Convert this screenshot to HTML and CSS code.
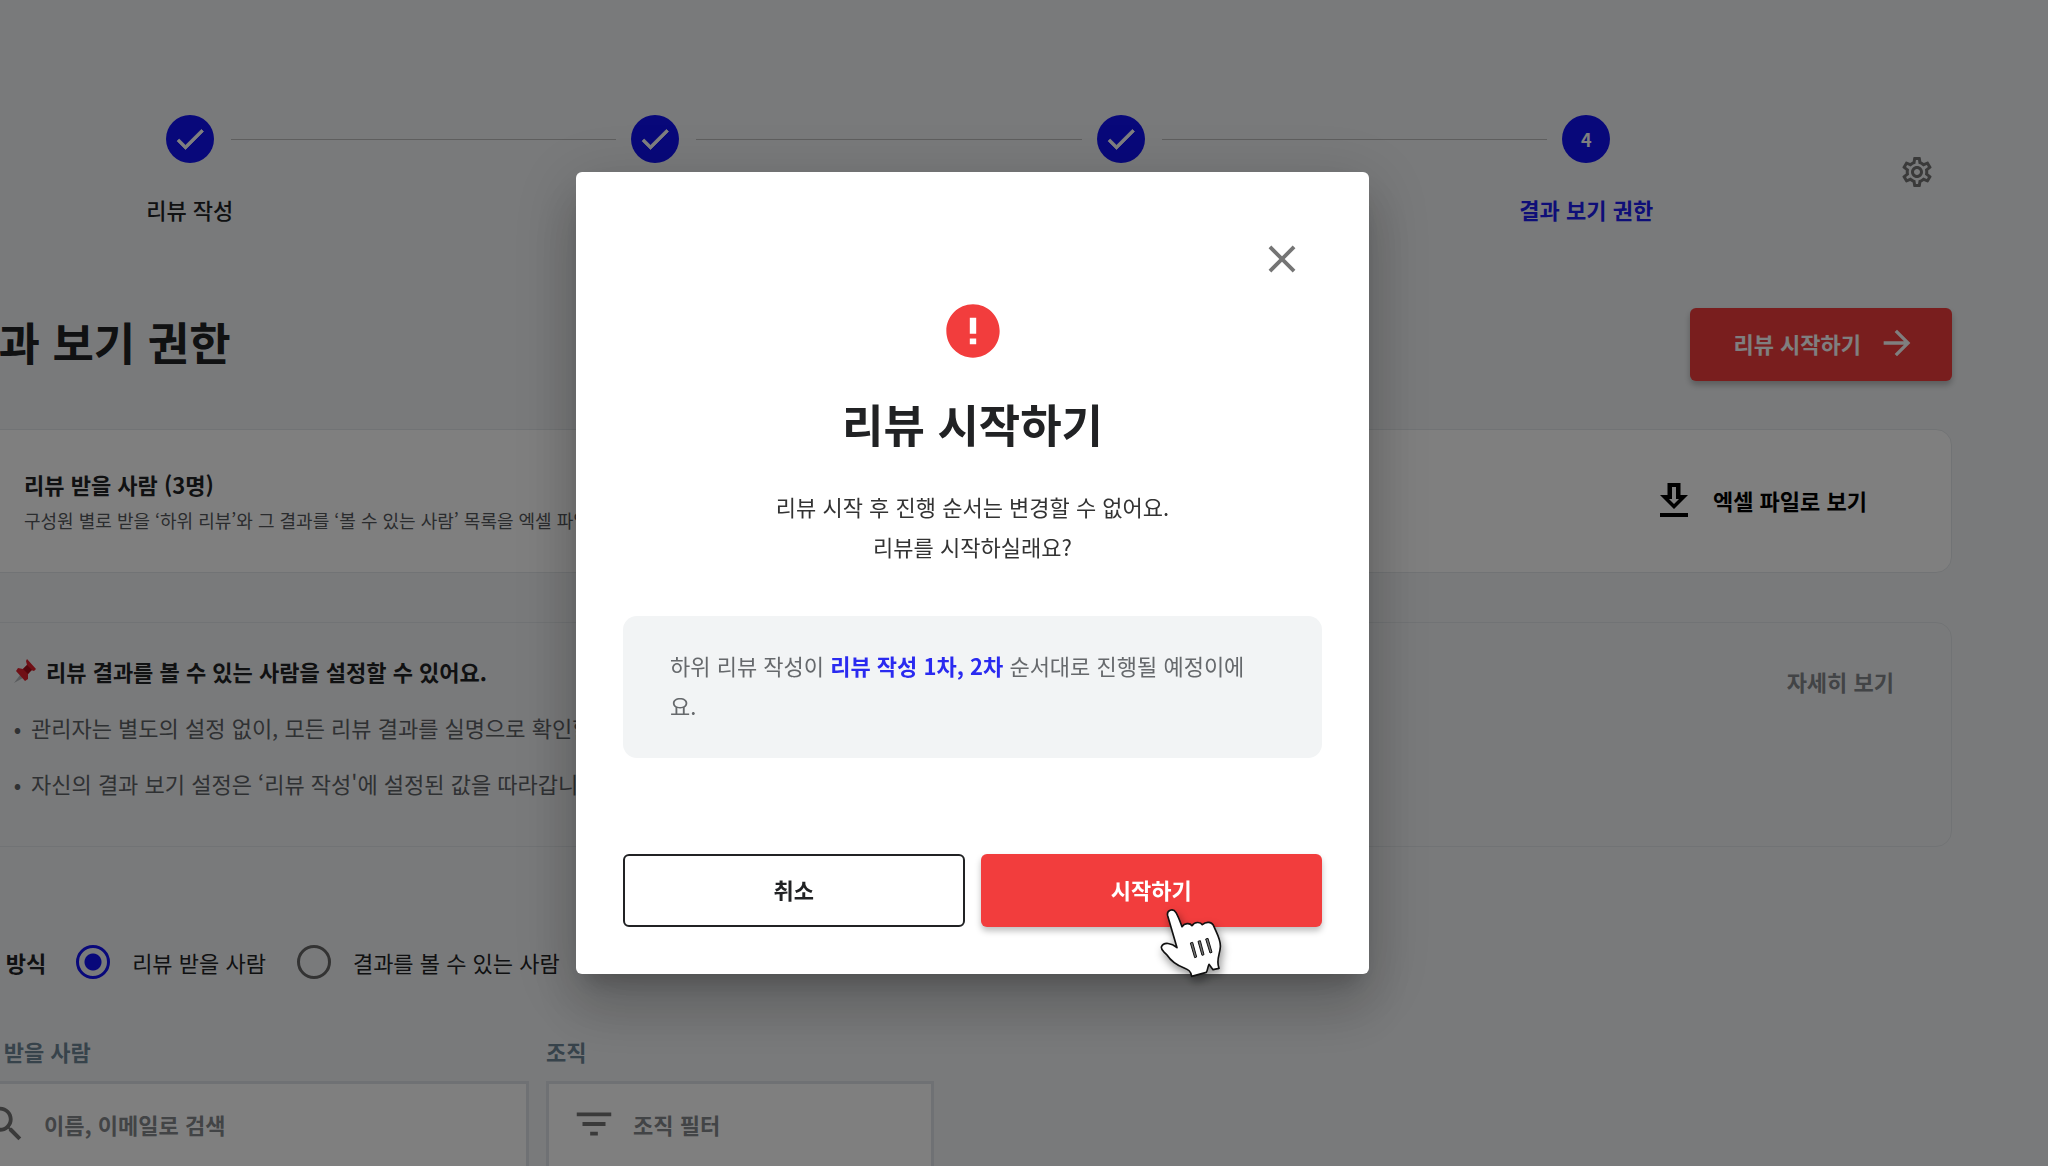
FILE: index.html
```
<!DOCTYPE html>
<html lang="ko">
<head>
  <meta charset="UTF-8">
  <meta name="viewport" content="width=device-width, initial-scale=1.0">
  <title>결과 보기 권한</title>
  <link rel="stylesheet" href="styles.css">
</head>
<body>
  <main class="page">
    <div class="top-bar">
      <ol class="stepper">
        <li class="step">
          <span class="step-icon"><svg viewBox="0 0 24 24"><path d="M9 16.2 4.8 12l-1.4 1.4L9 19 21 7l-1.4-1.4z"/></svg></span>
          <span class="step-label">리뷰 작성</span>
        </li>
        <li class="step">
          <span class="step-icon"><svg viewBox="0 0 24 24"><path d="M9 16.2 4.8 12l-1.4 1.4L9 19 21 7l-1.4-1.4z"/></svg></span>
        </li>
        <li class="step">
          <span class="step-icon"><svg viewBox="0 0 24 24"><path d="M9 16.2 4.8 12l-1.4 1.4L9 19 21 7l-1.4-1.4z"/></svg></span>
        </li>
        <li class="step active">
          <span class="step-icon">4</span>
          <span class="step-label">결과 보기 권한</span>
        </li>
      </ol>
      <button type="button" class="icon-btn settings-btn" aria-label="설정">
        <svg viewBox="0 0 24 24"><path d="M19.43 12.98c.04-.32.07-.64.07-.98 0-.34-.03-.66-.07-.98l2.11-1.65c.19-.15.24-.42.12-.64l-2-3.46c-.09-.16-.26-.25-.44-.25-.06 0-.12.01-.17.03l-2.49 1c-.52-.4-1.08-.73-1.69-.98l-.38-2.65C14.46 2.18 14.25 2 14 2h-4c-.25 0-.46.18-.49.42l-.38 2.65c-.61.25-1.17.59-1.69.98l-2.49-1c-.06-.02-.12-.03-.18-.03-.17 0-.34.09-.43.25l-2 3.46c-.13.22-.07.49.12.64l2.11 1.65c-.04.32-.07.65-.07.98 0 .33.03.66.07.98l-2.11 1.65c-.19.15-.24.42-.12.64l2 3.46c.09.16.26.25.44.25.06 0 .12-.01.17-.03l2.49-1c.52.4 1.08.73 1.69.98l.38 2.65c.03.24.24.42.49.42h4c.25 0 .46-.18.49-.42l.38-2.65c.61-.25 1.17-.59 1.69-.98l2.49 1c.06.02.12.03.18.03.17 0 .34-.09.43-.25l2-3.46c.12-.22.07-.49-.12-.64l-2.11-1.65zm-1.98-1.71c.04.31.05.52.05.73 0 .21-.02.43-.05.73l-.14 1.13.89.7 1.08.84-.7 1.21-1.27-.51-1.04-.42-.9.68c-.43.32-.84.56-1.25.73l-1.06.43-.16 1.13-.2 1.35h-1.4l-.19-1.35-.16-1.13-1.06-.43c-.43-.18-.83-.41-1.23-.71l-.91-.7-1.06.43-1.27.51-.7-1.21 1.08-.84.89-.7-.14-1.13c-.03-.31-.05-.54-.05-.74s.02-.43.05-.73l.14-1.13-.89-.7-1.08-.84.7-1.21 1.27.51 1.04.42.9-.68c.43-.32.84-.56 1.25-.73l1.06-.43.16-1.13.2-1.35h1.39l.19 1.35.16 1.13 1.06.43c.43.18.83.41 1.23.71l.91.7 1.06-.43 1.27-.51.7 1.21-1.07.85-.89.7.14 1.13zM12 8c-2.21 0-4 1.79-4 4s1.79 4 4 4 4-1.79 4-4-1.79-4-4-4zm0 6c-1.1 0-2-.9-2-2s.9-2 2-2 2 .9 2 2-.9 2-2 2z"/></svg>
      </button>
    </div>

    <div class="title-row">
      <h1>결과 보기 권한</h1>
      <button type="button" class="btn btn-primary start-btn">
        리뷰 시작하기
        <svg viewBox="0 0 24 24"><path d="m12 4-1.41 1.41L16.17 11H4v2h12.17l-5.58 5.59L12 20l8-8z"/></svg>
      </button>
    </div>

    <section class="card">
      <div>
        <h2>리뷰 받을 사람 (3명)</h2>
        <p class="card-desc">구성원 별로 받을 ‘하위 리뷰’와 그 결과를 ‘볼 수 있는 사람’ 목록을 엑셀 파일로 확인할 수 있어요.</p>
      </div>
      <button type="button" class="excel-btn">
        <svg viewBox="0 0 28 34">
          <path d="M7.5 0h13v12H28L14 26 0 12h7.500z"/>
          <path class="hole" d="M12 4h4v12h3l-5 5-5-5h3z"/>
          <path d="M0 30h28v4H0z"/>
        </svg>
        엑셀 파일로 보기
      </button>
    </section>

    <section class="card notice">
      <div>
        <h2>
          <svg class="pin" viewBox="0 0 22 26">
            <path d="M6 17 0 25l9-5z" fill="#b4b9bd"/>
            <path d="M13 1l9 10-2 2-3-1-3 4 0 5-3 2L2 13l2-3 5 1 4-4-1-4z" fill="#e0202c"/>
            <path d="M9 11l4-4 5 5-4 4z" fill="#a80c18"/>
          </svg>
          리뷰 결과를 볼 수 있는 사람을 설정할 수 있어요.
        </h2>
        <ul>
          <li>관리자는 별도의 설정 없이, 모든 리뷰 결과를 실명으로 확인할 수 있어요.</li>
          <li>자신의 결과 보기 설정은 ‘리뷰 작성'에 설정된 값을 따라갑니다.</li>
        </ul>
      </div>
      <a href="#" class="more-link">자세히 보기</a>
    </section>

    <fieldset class="view-mode">
      <legend>보기 방식</legend>
      <label><input type="radio" name="mode" checked>리뷰 받을 사람</label>
      <label><input type="radio" name="mode">결과를 볼 수 있는 사람</label>
    </fieldset>

    <div class="filters">
      <div class="field field-search">
        <label for="search">리뷰 받을 사람</label>
        <div class="input-box">
          <svg viewBox="0 0 24 24"><path d="M15.500 14h-.79l-.28-.27C15.410 12.590 16 11.110 16 9.500 16 5.910 13.090 3 9.500 3S3 5.910 3 9.500 5.910 16 9.500 16c1.610 0 3.090-.59 4.230-1.570l.27.28v.79l5 4.990L20.490 19l-4.990-5zm-6 0C7.010 14 5 11.990 5 9.500S7.010 5 9.500 5 14 7.010 14 9.500 11.990 14 9.500 14z"/></svg>
          <input type="text" id="search" placeholder="이름, 이메일로 검색">
        </div>
      </div>
      <div class="field field-org">
        <label for="org">조직</label>
        <div class="input-box">
          <svg viewBox="0 0 24 24"><path d="M10 18h4v-2h-4v2zM3 6v2h18V6H3zm3 7h12v-2H6v2z"/></svg>
          <input type="text" id="org" placeholder="조직 필터">
        </div>
      </div>
    </div>
  </main>

  <div class="backdrop">
    <div class="modal" role="dialog" aria-modal="true" aria-labelledby="modalTitle">
      <button type="button" class="icon-btn close-btn" aria-label="닫기">
        <svg viewBox="0 0 24 24"><path d="M19 6.410 17.590 5 12 10.590 6.410 5 5 6.410 10.590 12 5 17.590 6.410 19 12 13.410 17.590 19 19 17.590 13.410 12z"/></svg>
      </button>
      <svg class="alert-icon" viewBox="0 0 24 24"><path d="M12 2C6.480 2 2 6.480 2 12s4.480 10 10 10 10-4.480 10-10S17.520 2 12 2zm1.200 15h-2.400v-2.200h2.400V17zm0-4h-2.400V7h2.400v6z"/></svg>
      <h2 id="modalTitle" class="modal-title">리뷰 시작하기</h2>
      <p class="modal-text">리뷰 시작 후 진행 순서는 변경할 수 없어요.<br>리뷰를 시작하실래요?</p>
      <p class="modal-info">하위 리뷰 작성이 <strong>리뷰 작성 1차, 2차</strong> 순서대로 진행될 예정이에요.</p>
      <div class="modal-actions">
        <button type="button" class="btn btn-outline">취소</button>
        <button type="button" class="btn btn-primary">시작하기</button>
        <svg class="cursor" viewBox="111 75 198 225">
          <path class="hand" d="M168 200 L140 104 C136 88 156 80 165 95 C173 109 178 124 183 137 C190 127 206 124 213 134 C221 122 238 122 244 131 C256 120 274 122 279 137 C285 153 300 176 298 198 C297 222 284 236 294 262 L276 266 L264 250 C260 258 260 268 256 274 L212 286 C210 270 202 266 188 260 C158 249 146 234 138 222 C130 212 120 210 121 198 C128 181 152 186 168 200 Z"/>
          <path class="fold" d="M208 186l7-2 12 44-6 2zM231 181l7-2 11 42-6 2zM254 174l7-2 12 42-6 2z"/>
        </svg>
      </div>
    </div>
  </div>
</body>
</html>
```
FILE: styles.css
```
* {
  box-sizing: border-box;
}
body {
  margin: 0;
  height: 100vh;
  overflow: hidden;
  background: #f3f5f7;
  color: #212224;
  font-family: "Noto Sans CJK KR", sans-serif;
  font-size: 22px;
  line-height: 40px;
}
h1, h2, p, ul, ol {
  margin: 0;
  padding: 0;
}
ol {
  list-style: none;
}
button, input {
  font: inherit;
  color: inherit;
}
button {
  background: none;
  border: none;
  padding: 0;
  cursor: pointer;
}
svg {
  fill: currentColor;
  flex-shrink: 0;
}

/* page behind the dialog, scrolled a little to the right */
.page {
  margin: 0 96px 0 -43px;
  padding-top: 115px;
}
.top-bar {
  display: flex;
  align-items: center;
}
.stepper {
  flex: 1;
  display: flex;
  margin-right: 80px;
}
.step {
  flex: 1;
  position: relative;
  display: flex;
  flex-direction: column;
  align-items: center;
  gap: 26px;
}
.step + .step::before {
  content: "";
  position: absolute;
  top: 24px;
  left: calc(-50% + 41px);
  right: calc(50% + 39px);
  border-top: 1px solid #bdbdbd;
}
.step-icon {
  width: 48px;
  height: 48px;
  border-radius: 50%;
  background: #1010f5;
  color: #fff;
  display: flex;
  align-items: center;
  justify-content: center;
  font-size: 18px;
  font-weight: bold;
}
.step-icon svg {
  width: 36px;
  stroke: currentColor;
  stroke-width: 0.5;
}
.step-label {
  font-weight: 500;
}
.active .step-label {
  color: #1c1cf0;
  font-weight: bold;
}
.icon-btn {
  display: flex;
  color: #757575;
}
.settings-btn {
  margin-right: 17px;
}
.settings-btn svg {
  width: 36px;
}
.title-row {
  display: flex;
  align-items: center;
  justify-content: space-between;
  margin: 79px 0 48px;
}
h1, .modal-title {
  font-size: 45px;
  line-height: 64px;
  font-weight: bold;
}
h1 {
  padding-bottom: 6px;
}
.btn {
  display: flex;
  align-items: center;
  justify-content: center;
  height: 73px;
  padding-bottom: 3px;
  border-radius: 6px;
  font-weight: bold;
}
.btn-primary {
  background: #f23d3d;
  color: #fff;
  box-shadow: 0 4px 6px rgba(0, 0, 0, 0.25);
}
.btn-outline {
  border: 2px solid #212224;
  background: #fff;
}
.start-btn {
  padding: 0 35px 3px 43px;
  gap: 16px;
}
.start-btn svg {
  width: 40px;
}
.card {
  display: flex;
  align-items: center;
  justify-content: space-between;
  height: 144px;
  padding: 0 84px 3px 66px;
  background: #fff;
  border: 1px solid #e3e7ea;
  border-radius: 16px;
}
.card h2 {
  display: flex;
  align-items: center;
  font-size: 22px;
  font-weight: bold;
}
.card-desc {
  font-size: 18px;
  line-height: 32px;
  color: #55585c;
}
.excel-btn {
  display: flex;
  align-items: center;
  gap: 25px;
  color: #000;
  font-weight: bold;
}
.excel-btn svg {
  width: 28px;
}
.excel-btn .hole {
  fill: #fff;
}
.notice {
  height: 225px;
  margin-top: 49px;
  padding: 28px 57px 0 56px;
  align-items: flex-start;
  background: none;
}
.notice h2 {
  gap: 10px;
}
.pin {
  width: 22px;
}
.notice ul {
  padding-left: 17px;
  color: #5f6266;
}
.notice li {
  margin-top: 16px;
}
.notice li::marker {
  content: "•  ";
}
.more-link {
  margin-top: 10px;
  color: #85888c;
  font-weight: bold;
  text-decoration: none;
}
.view-mode {
  display: flex;
  align-items: center;
  margin: 95px 0 49px;
  padding: 0;
  border: none;
}
.view-mode legend {
  float: left;
  margin-right: 28px;
  font-weight: bold;
}
.view-mode label {
  display: flex;
  align-items: center;
  gap: 22px;
  margin-right: 31px;
}
.view-mode input {
  appearance: none;
  width: 34px;
  height: 34px;
  margin: 0;
  border: 3px solid #666;
  border-radius: 50%;
}
.view-mode input:checked {
  border-color: #1010f5;
  background: radial-gradient(circle, #1010f5 8px, transparent 9px);
}
.filters {
  display: flex;
  gap: 17px;
}
.field-search {
  flex: 0 0 572px;
}
.field-org {
  flex: 0 0 388px;
}
.field label {
  display: block;
  margin-bottom: 10px;
  color: #6f8797;
  font-weight: bold;
}
.input-box {
  display: flex;
  align-items: center;
  gap: 16px;
  height: 92px;
  padding: 0 22px 7px;
  border: 3px solid #dfe3e8;
  background: #fff;
  color: #757575;
}
.input-box svg {
  width: 46px;
}
.input-box input {
  flex: 1;
  min-width: 0;
  padding: 0;
  border: none;
  outline: none;
  background: none;
}
.input-box input::placeholder {
  color: #85888c;
  font-weight: bold;
}

/* dialog */
.backdrop {
  position: fixed;
  inset: 0;
  display: flex;
  align-items: center;
  justify-content: center;
  padding: 0 103px 21px 0;
  background: rgba(0, 0, 0, 0.5);
}
.modal {
  display: flex;
  flex-direction: column;
  align-items: center;
  width: 793px;
  padding: 64px 47px 47px;
  background: #fff;
  border-radius: 6px;
  box-shadow: 0 16px 22px -10px rgba(0, 0, 0, 0.2), 0 34px 54px 4px rgba(0, 0, 0, 0.14), 0 13px 66px 11px rgba(0, 0, 0, 0.12);
}
.close-btn {
  align-self: flex-end;
  margin-right: 17px;
}
.close-btn svg {
  width: 46px;
}
.alert-icon {
  width: 64px;
  margin-top: 17px;
  color: #f23d3d;
}
.modal-title {
  margin: 29px 0 30px;
}
.modal-text {
  text-align: center;
  color: #333;
}
.modal-info {
  align-self: stretch;
  margin: 50px 0 96px;
  padding: 29px 60px 33px 47px;
  border-radius: 14px;
  background: #f2f4f5;
  color: #66696c;
  word-break: break-all;
}
.modal-info strong {
  color: #2a2af0;
}
.modal-actions {
  position: relative;
  align-self: stretch;
  display: grid;
  grid-template-columns: 1fr 1fr;
  gap: 16px;
}
.cursor {
  position: absolute;
  top: 52px;
  right: 98px;
  width: 66px;
  overflow: visible;
  filter: drop-shadow(2px 5px 4px rgba(0, 0, 0, 0.4));
}
.cursor .hand {
  fill: #fff;
  stroke: #111;
  stroke-width: 5;
  stroke-linejoin: round;
}
.cursor .fold {
  fill: #777;
  stroke: #111;
  stroke-width: 3;
}
```
